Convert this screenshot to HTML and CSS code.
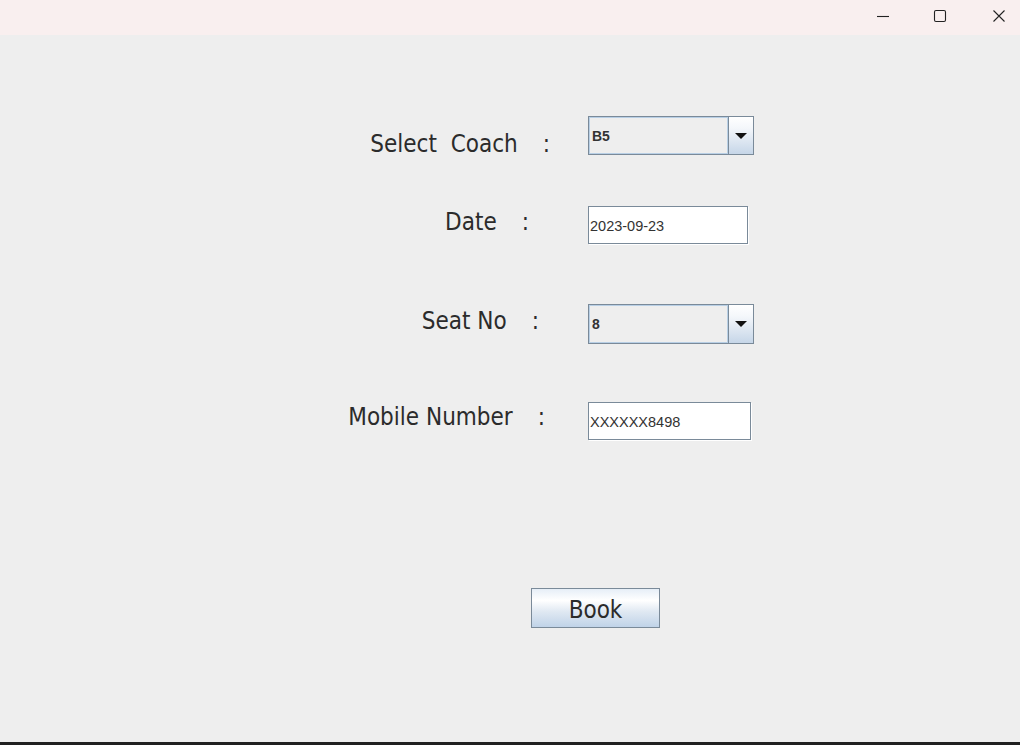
FILE: index.html
```html
<!DOCTYPE html>
<html>
<head>
<meta charset="utf-8">
<link rel="stylesheet" href="styles.css">
</head>
<body>
<div class="window">
  <div class="titlebar">
    <div class="tb-btn tb-min">
      <svg width="14" height="14" viewBox="0 0 14 14"><path d="M1 7.5H13" stroke="#222" stroke-width="1.1"/></svg>
    </div>
    <div class="tb-btn tb-max">
      <svg width="14" height="14" viewBox="0 0 14 14"><rect x="1.5" y="1.5" width="11" height="11" rx="1.5" fill="none" stroke="#222" stroke-width="1.1"/></svg>
    </div>
    <div class="tb-btn tb-close">
      <svg width="14" height="14" viewBox="0 0 14 14"><path d="M1.5 1.5L12.5 12.5M12.5 1.5L1.5 12.5" stroke="#222" stroke-width="1.1"/></svg>
    </div>
  </div>
  <div class="content">
    <div class="row r1">
      <div class="label l1"><span class="name">Select&nbsp; Coach</span><span class="colon">:</span></div>
      <div class="combo">
        <div class="combo-text">B5</div>
        <div class="combo-arrow"><span class="tri"></span></div>
      </div>
    </div>
    <div class="row r2">
      <div class="label l2"><span class="name">Date</span><span class="colon">:</span></div>
      <div class="field f-date">2023-09-23</div>
    </div>
    <div class="row r3">
      <div class="label l3"><span class="name">Seat No</span><span class="colon">:</span></div>
      <div class="combo c2">
        <div class="combo-text">8</div>
        <div class="combo-arrow"><span class="tri"></span></div>
      </div>
    </div>
    <div class="row r4">
      <div class="label l4"><span class="name">Mobile Number</span><span class="colon">:</span></div>
      <div class="field f-mobile">XXXXXX8498</div>
    </div>
    <div class="btn-row">
      <button class="book">Book</button>
    </div>
  </div>
</div>
</body>
</html>
```

FILE: styles.css
```css
html, body {
  margin: 0;
  padding: 0;
}
body {
  width: 1020px;
  height: 745px;
  overflow: hidden;
  background: #eeeeee;
  font-family: "DejaVu Sans", Tahoma, sans-serif;
}
.window {
  display: flex;
  flex-direction: column;
  height: 745px;
  box-sizing: border-box;
  border-bottom: 3px solid #202020;
}
.titlebar {
  height: 35px;
  background: #f9efef;
  display: flex;
  justify-content: flex-end;
  flex-shrink: 0;
}
.tb-btn {
  width: 46px;
  height: 32px;
  display: flex;
  align-items: center;
  justify-content: center;
}
.tb-min { margin-right: 11px; }
.tb-max { margin-right: 14px; }
.tb-close { width: 43px; }
.content {
  flex: 1;
  background: #eeeeee;
  display: flex;
  flex-direction: column;
}
.row {
  display: flex;
  align-items: flex-start;
}
.r1 { margin-top: 81px; }
.r2 { margin-top: 47px; }
.r3 { margin-top: 60px; }
.r4 { margin-top: 58px; }
.label {
  width: 588px;
  box-sizing: border-box;
  display: flex;
  justify-content: flex-end;
  font-size: 24px;
  line-height: 30px;
  color: #2b2b2b;
  font-family: "DejaVu Sans Condensed", "DejaVu Sans", sans-serif;
}
.colon {
  margin-left: 25px;
}
.l1 { padding-right: 38px; margin-top: 13px; }
.l2 { padding-right: 59px; margin-top: 1px; }
.l3 { padding-right: 49px; margin-top: 2px; }
.l4 { padding-right: 43px; margin-top: 0; }

.combo {
  width: 166px;
  height: 39px;
  box-sizing: border-box;
  border: 1px solid #7a8a99;
  display: flex;
  background: #eeeeee;
}
.c2 { height: 40px; }
.combo-text {
  flex: 1;
  border: 1px solid #b8cfe5;
  display: flex;
  align-items: center;
  padding-left: 2px;
  font-family: "Liberation Sans", Arial, sans-serif;
  font-weight: bold;
  font-size: 14px;
  color: #333;
}
.combo-arrow {
  width: 24px;
  border-left: 1px solid #7a8a99;
  background: linear-gradient(to bottom, #ffffff 0%, #f4f7fb 30%, #c6d6e8 100%);
  display: flex;
  align-items: center;
  justify-content: center;
}
.tri {
  width: 0;
  height: 0;
  border-left: 6px solid transparent;
  border-right: 6px solid transparent;
  border-top: 6px solid #111;
}
.field {
  height: 38px;
  box-sizing: border-box;
  border: 1px solid #7a8a99;
  box-shadow: 1px 1px 0 #ffffff;
  background: #ffffff;
  display: flex;
  align-items: center;
  padding-left: 1px;
  padding-top: 2px;
  font-family: "Liberation Sans", Arial, sans-serif;
  font-size: 14.5px;
  color: #333;
}
.f-date { width: 160px; }
.f-mobile { width: 163px; }
.btn-row {
  margin-top: 148px;
  padding-left: 531px;
  display: flex;
}
.book {
  width: 129px;
  height: 40px;
  border: 1px solid #7a8a99;
  background: linear-gradient(to bottom, #e6eef7 0%, #ffffff 30%, #dfe8f2 60%, #c0d3e8 100%);
  font-family: "DejaVu Sans Condensed", "DejaVu Sans", sans-serif;
  font-size: 24px;
  color: #2b2b2b;
  padding: 3px 0 0 0;
  margin: 0;
}
```
